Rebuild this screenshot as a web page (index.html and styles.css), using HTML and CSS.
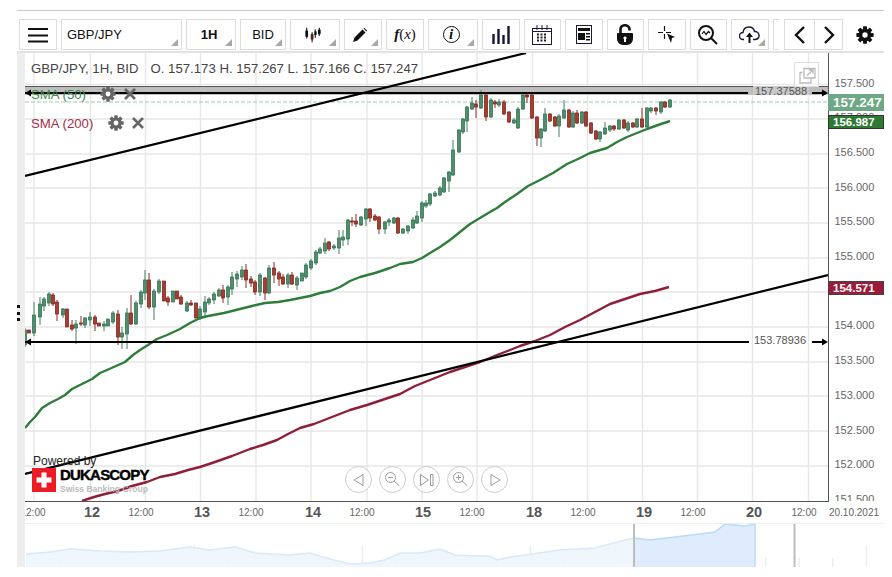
FILE: index.html
```html
<!DOCTYPE html>
<html lang="en">
<head>
<meta charset="utf-8">
<title>GBP/JPY chart</title>
<link rel="stylesheet" href="styles.css">
</head>
<body>
<svg class="defs" width="0" height="0" aria-hidden="true">
  <symbol id="gear" viewBox="-10 -10 20 20">
    <g class="gear-teeth">
      <rect x="-2.2" y="-9.6" width="4.4" height="19.2" rx=".8"/>
      <rect x="-2.2" y="-9.6" width="4.4" height="19.2" rx=".8" transform="rotate(45)"/>
      <rect x="-2.2" y="-9.6" width="4.4" height="19.2" rx=".8" transform="rotate(90)"/>
      <rect x="-2.2" y="-9.6" width="4.4" height="19.2" rx=".8" transform="rotate(135)"/>
      <path fill-rule="evenodd" d="M0-7a7 7 0 1 0 0 14a7 7 0 1 0 0-14zM0-3a3 3 0 1 1 0 6a3 3 0 1 1 0-6z"/>
    </g>
    <circle class="gear-hole" r="3"/>
  </symbol>
  <symbol id="cross" viewBox="0 0 14 14">
    <path class="cross-path" d="M2 2L12 12M12 2L2 12"/>
  </symbol>
</svg>

<div class="top-rule"></div>

<div class="toolbar">
  <div class="btn w38">
    <svg width="22" height="16" viewBox="0 0 22 16"><path class="ico-line" d="M1 2H21M1 8.5H21M1 14.5H21"/></svg>
  </div>
  <div class="btn w121 btn-left corner"><span>GBP/JPY</span></div>
  <div class="btn w50 corner btn-nudge"><b>1H</b></div>
  <div class="btn w46 corner"><span>BID</span></div>
  <div class="btn w50 corner">
    <svg class="shift-c" width="18" height="16" viewBox="0 0 20 16"><path class="ico-thin" d="M3 0V12M9 5V16M12.500 2V11M17 0V9"/><rect x="1.500" y="3" width="3" height="7"/><rect x="7.500" y="7" width="3" height="6" class="ico-red"/><rect x="11.500" y="4" width="2.500" height="4"/><rect x="15.500" y="2" width="3" height="5"/></svg>
  </div>
  <div class="btn w38 corner">
    <svg class="shift" width="14" height="14" viewBox="0 0 14 14"><path d="M0 14L1.500 9.500L9.500 1.500L12.500 4.500L4.500 12.500ZM10.500.5L11.500 0L14 2.500L13.500 3.500Z"/></svg>
  </div>
  <div class="btn w38 fx"><i class="fx-f">f</i><span>(</span><i>x</i><span>)</span></div>
  <div class="btn w50 corner">
    <span class="info"><i>i</i></span>
  </div>
  <div class="btn w37">
    <svg width="18" height="18" viewBox="0 0 18 18"><path class="ico-bar" d="M1.500 8V18M6.500 3V18M11.500 9V18M16.500 0V18"/></svg>
  </div>
  <div class="btn w37">
    <svg width="20" height="20" viewBox="0 0 20 20"><rect class="ico-out" x=".5" y="3.500" width="19" height="16"/><path class="ico-out" d="M.5 6.500H19.500M5 0V5M10 0V5M15 0V5"/><path class="ico-dots" d="M5 9.500H15M5 12.500H15M5 15.500H15"/></svg>
  </div>
  <div class="btn w37">
    <svg width="16" height="19" viewBox="0 0 16 19"><rect class="ico-out" x=".5" y=".5" width="15" height="18"/><path d="M2 3H14V6H2ZM2 8H9V15H2ZM10 8H14V9.500H10ZM10 11H14V12.500H10ZM10 14H14V15.500H10Z"/></svg>
  </div>
  <div class="btn w37">
    <svg width="16" height="21" viewBox="0 0 16 21"><path class="ico-lock" d="M3.500 9V5.500C3.500 0 12 0 12.500 5V6.500"/><path fill-rule="evenodd" d="M1 9H15Q16 9 16 10V15A6 6 0 0 1 10 21H6A6 6 0 0 1 0 15V10Q0 9 1 9ZM8 12.500A1.500 1.500 0 0 0 7 15.200V18H9V15.200A1.500 1.500 0 0 0 8 12.500Z"/></svg>
  </div>
  <div class="btn w37">
    <svg width="18" height="17" viewBox="0 0 18 17"><path class="ico-thin" d="M6.500 0V5M6.500 8V13M0 6.500H5M8 6.500H13"/><path d="M9 7.500L17 11L14 12L13 17Z"/></svg>
  </div>
  <div class="btn w37">
    <svg width="20" height="20" viewBox="0 0 20 20"><circle class="ico-out2" cx="8" cy="8" r="7"/><path class="ico-out2" d="M13 13L19 19"/><path class="ico-thin" d="M4 9L6 6.500L8 9.500L10.500 6.500L12 8"/></svg>
  </div>
  <div class="btn w37 corner">
    <svg width="21" height="17" viewBox="0 0 21 17"><path class="ico-out ico-cloud" d="M5 13.500H4A3.500 3.500 0 0 1 4 6.500C4.500 2 8 1 10 1C13 1 15 3 15.500 5.500C18.500 5 20.500 8 20 10.500C19.500 12.500 18 13.500 16 13.500H14"/><path d="M9.500 17V11H7L10.500 6.500L14 11H11.500V17Z"/></svg>
  </div>
  <div class="btn-stub"></div>
  <div class="pager">
    <div class="pager-cell"><svg width="11" height="18" viewBox="0 0 11 18"><path class="ico-chev" d="M10 1L2 9L10 17"/></svg></div>
    <div class="pager-cell"><svg width="11" height="18" viewBox="0 0 11 18"><path class="ico-chev" d="M1 1L9 9L1 17"/></svg></div>
  </div>
  <svg class="gear-main"><use href="#gear"/></svg>
</div>

<div class="frame">
  <div class="strip">
    <div class="grip"><span></span><span></span><span></span></div>
  </div>
  <div class="main">
    <div class="chart-row">
      <div class="plot">
        <svg class="plot-svg" width="803" height="448" viewBox="25 53 803 448">
          <path class="grid" d="M34 53V501M90.500 53V501M145.500 53V501M200.500 53V501M256 53V501M311 53V501M367 53V501M422 53V501M477 53V501M532.500 53V501M587.500 53V501M642.500 53V501M697.500 53V501M752.500 53V501M808.500 53V501M25 84.500H828M25 119H828M25 154H828M25 188H828M25 223H828M25 258H828M25 292H828M25 327H828M25 362H828M25 396H828M25 431H828M25 466H828"/>
          <rect class="band" x="25" y="87" width="803" height="8"/>
          <path class="band-top" d="M25 86.500H828"/>
          <path class="price-line" d="M25 102H828"/>
          <g id="candles"></g>
          <polyline class="sma50" points="25,428 30,422 35,417 42,408 50,403 58,399 65,395 72,389 80,385 92,379 100,373 107,370 116,366 125,362 133,355 140,350 148,345 157,339 167,335 180,329 190,323 200,318 208,316 224,313 240,309 252,306 265,303 278,302 290,300 300,298 310,296 320,293 330,291 340,287 350,281 360,277 375,273 390,268 400,264 413,262 422,258 430,253 440,247 450,240 460,232 470,224 480,218 490,212 497,208 505,202 517,194 528,186 540,180 553,173 567,164 578,159 590,153 607,148 617,142 627,137 637,133 647,129 658,125 670,121"/>
          <polyline class="sma200" points="82,501 94,497 105,494 118,491 132,486 147,482 160,477 175,474 188,470 200,467 215,462 232,456 250,449 263,445 277,440 288,434 300,428 314,424 332,417 350,410 367,405 382,400 400,394 415,386 430,380 450,372 465,367 480,362 497,355 510,350 520,346 535,341 550,335 565,327 580,320 595,312 610,304 625,299 640,294 655,291 669,287"/>
          <path class="trend" d="M25 176L526 53M25 474L828 275"/>
          <path class="trend" d="M25 93H748M29 93H25M25 342H749M812 93H824M812 342H824"/>
          <path class="arrow" d="M828 93L822 89.500V96.500ZM828 342L822 338.500V345.500ZM25 93L31 89.500V96.500ZM25 342L31 338.500V345.500Z"/>
          <rect class="tag-bg" x="753" y="86" width="56" height="9"/>
          <text class="line-label" x="755" y="95">157.37588</text>
          <text class="line-label" x="754" y="344">153.78936</text>
          <g class="expand">
            <rect class="expand-box" x="794.500" y="62.500" width="24" height="24"/>
            <path class="expand-line" d="M802.500 72.500H800V83H811V78M804 68.500H815V78H804ZM807 75.500L813 70M809 70H813V74"/>
          </g>
        </svg>

        <div class="legend">
          <div class="legend-head"><span>GBP/JPY, 1H, BID</span><span>O. 157.173 H. 157.267 L. 157.166 C. 157.247</span></div>
          <div class="ind ind-green"><span class="ind-name">SMA (50)</span><svg class="ind-gear"><use href="#gear"/></svg><svg class="ind-x"><use href="#cross"/></svg></div>
          <div class="ind ind-red"><span class="ind-name">SMA (200)</span><svg class="ind-gear"><use href="#gear"/></svg><svg class="ind-x"><use href="#cross"/></svg></div>
        </div>

        <div class="logo">
          <div class="logo-pow">Powered by</div>
          <div class="logo-row">
            <svg width="24" height="24" viewBox="0 0 24 24"><rect class="logo-red" width="24" height="24"/><path class="logo-white" d="M9.500 4.500H14.500V9.500H19.500V14.500H14.500V19.500H9.500V14.500H4.500V9.500H9.500Z"/></svg>
            <div class="logo-text"><div class="logo-name">DUKASCOPY</div><div class="logo-sub">Swiss Banking Group</div></div>
          </div>
        </div>

        <div class="controls">
          <div class="ctl"><svg width="14" height="14" viewBox="0 0 14 14"><path class="ctl-line" d="M11 1.500V12.500L2 7Z"/></svg></div>
          <div class="ctl"><svg width="17" height="17" viewBox="0 0 17 17"><circle class="ctl-line" cx="6.500" cy="6.500" r="5"/><path class="ctl-line" d="M4 6.500H9M10 10L15.500 15"/></svg></div>
          <div class="ctl"><svg width="16" height="14" viewBox="0 0 16 14"><path class="ctl-line" d="M1.500 1.500V12.500L9.500 7ZM11.500 1.500H14V12.500H11.500Z"/></svg></div>
          <div class="ctl"><svg width="17" height="17" viewBox="0 0 17 17"><circle class="ctl-line" cx="6.500" cy="6.500" r="5"/><path class="ctl-line" d="M4 6.500H9M6.500 4V9M10 10L15.500 15"/></svg></div>
          <div class="ctl"><svg width="14" height="14" viewBox="0 0 14 14"><path class="ctl-line" d="M3 1.500V12.500L12 7Z"/></svg></div>
        </div>
      </div>

      <div class="price-axis">
        <div class="price-list">
          <div>157.500</div><div>157.000</div><div>156.500</div><div>156.000</div><div>155.500</div><div>155.000</div><div>154.500</div><div>154.000</div><div>153.500</div><div>153.000</div><div>152.500</div><div>152.000</div><div>151.500</div>
        </div>
        <div class="tag tag-price">157.247</div>
        <div class="tag tag-sma50">156.987</div>
        <div class="tag tag-sma200">154.571</div>
      </div>
    </div>

    <svg class="time-axis" width="859" height="22" viewBox="25 502 859 22">
      <path class="t-rule" d="M25 523.500H884"/>
      <text class="t-hour" x="33" y="516">12:00</text>
      <text class="t-day" x="92" y="517">12</text>
      <text class="t-hour" x="141" y="516">12:00</text>
      <text class="t-day" x="202" y="517">13</text>
      <text class="t-hour" x="251" y="516">12:00</text>
      <text class="t-day" x="313" y="517">14</text>
      <text class="t-hour" x="362" y="516">12:00</text>
      <text class="t-day" x="423" y="517">15</text>
      <text class="t-hour" x="472" y="516">12:00</text>
      <text class="t-day" x="534" y="517">18</text>
      <text class="t-hour" x="583" y="516">12:00</text>
      <text class="t-day" x="644" y="517">19</text>
      <text class="t-hour" x="693" y="516">12:00</text>
      <text class="t-day" x="754" y="517">20</text>
      <text class="t-hour" x="804" y="516">12:00</text>
      <text class="t-date" x="854" y="516">20.10.2021</text>
    </svg>

    <svg class="navigator" width="859" height="43" viewBox="25 524 859 43">
      <path id="nav-ticks" class="nav-tick" d=""/>
      <polygon class="nav-fill" points="26,567 26,554 50,552 70,549 100,551 130,552 160,551 190,547 210,550 235,547 255,553 290,555 310,553 330,559 350,564 370,563 385,560 400,553 420,553 440,549 455,555 480,556 490,556 497,560 510,557 525,555 560,550 595,548 625,540 634,538 634,567"/>
      <polyline class="nav-line" points="26,554 50,552 70,549 100,551 130,552 160,551 190,547 210,550 235,547 255,553 290,555 310,553 330,559 350,564 370,563 385,560 400,553 420,553 440,549 455,555 480,556 490,556 497,560 510,557 525,555 560,550 595,548 625,540 634,538"/>
      <polygon class="nav-sel" points="634,567 634,538 650,540 675,537 700,534 715,532 725,524 745,526 755,524 755,567"/>
      <polyline class="nav-sel-line" points="634,538 650,540 675,537 700,534 715,532 725,524 745,526 755,524 755,567"/>
      <path class="nav-handle" d="M634 524V567M794.500 524V567"/>
    </svg>
  </div>
</div>
<script src="script.js"></script>
</body>
</html>
```

FILE: styles.css
```css
* { box-sizing: border-box; }
html, body { margin: 0; padding: 0; background: #fff; overflow: hidden; }
body { width: 892px; height: 577px; font-family: "Liberation Sans", Arial, sans-serif; color: #222; }
.defs { position: absolute; }

.gear-teeth { fill: currentColor; }
.gear-hole { fill: #fff; }
.cross-path { fill: none; stroke: currentColor; stroke-width: 2.6; }

.top-rule { height: 1px; width: 867px; margin: 10px 0 0 17px; background: #c8c8c8; }

.toolbar { display: flex; gap: 4px; align-items: center; height: 31px; margin: 8px 0 0 19px; }
.btn { position: relative; height: 31px; border: 1px solid #ddd; display: flex; align-items: center; justify-content: center; font-size: 13px; color: #111; background: #fff; flex: none; }
.btn svg { display: block; fill: #111; }
.btn .shift { margin-right: 6px; }
.btn .shift-c { margin-left: 1px; margin-right: 5px; }
.btn-nudge { padding-right: 4px; }
.btn-left { justify-content: flex-start; padding-left: 5px; }
.w37 { width: 37.5px; }
.w38 { width: 38px; }
.w46 { width: 46px; }
.w50 { width: 50px; }
.w121 { width: 121px; }
.corner::after { content: ""; position: absolute; right: 3px; bottom: 3px; width: 0; height: 0; border-style: solid; border-width: 0 0 7px 7px; border-color: transparent transparent #a8a8a8 transparent; }
.btn-stub { width: 6px; height: 31px; flex: none; border: 1px solid #ddd; border-right: 0; }
.ico-line { fill: none; stroke: #111; stroke-width: 2; }
.ico-thin { fill: none; stroke: #111; stroke-width: 1.200; }
.ico-red { fill: #5a1a10; }
.ico-bar { fill: none; stroke: #16163a; stroke-width: 2.400; }
.ico-out { fill: none; stroke: #1a1a3a; stroke-width: 1; }
.ico-cloud { stroke-width: 1.400; }
.ico-out2 { fill: none; stroke: #111; stroke-width: 2; }
.ico-chev { fill: none; stroke: #111; stroke-width: 2.400; }
.ico-dots { fill: none; stroke: #222; stroke-width: 2; stroke-dasharray: 2 1.500; }
.ico-lock { fill: none; stroke: #111; stroke-width: 2.600; }
.fx { font-family: "Liberation Serif", serif; font-size: 15px; }
.fx-f { font-weight: bold; }
.info { display: flex; width: 17px; height: 17px; border: 1.500px solid #111; border-radius: 50%; align-items: center; justify-content: center; font-family: "Liberation Serif", serif; font-size: 15px; font-weight: bold; margin-right: 4px; }
.pager { display: flex; width: 59px; height: 31px; border: 1px solid #ddd; margin-left: 1.500px; flex: none; }
.pager-cell { width: 29px; flex: none; display: flex; align-items: center; justify-content: center; }
.pager-cell + .pager-cell { border-left: 1px solid #ddd; }
.gear-main { width: 18px; height: 18px; margin-left: 9px; color: #111; flex: none; }

.frame { display: flex; width: 867px; height: 516px; margin: 1px 0 0 17px; border-top: 2px solid #e2e2e2; }
.strip { width: 8px; flex: none; height: 514px; background: #eee; display: flex; align-items: flex-start; justify-content: center; padding-top: 252px; }
.grip { display: flex; flex-direction: column; gap: 3.500px; width: 4px; margin-left: -4px; }
.grip span { display: block; width: 3px; height: 3px; background: #111; }
.main { width: 859px; flex: none; }
.chart-row { display: flex; height: 449px; }

.plot { position: relative; width: 803px; height: 449px; border-bottom: 1px solid #555; flex: none; overflow: hidden; }
.plot-svg { display: block; }
.grid { fill: none; stroke: #e7e7e7; stroke-width: 1.400; }
.band { fill: #bdbdbd; }
.band-top { fill: none; stroke: #555; stroke-width: 1; }
.price-line { fill: none; stroke: #a0cbb0; stroke-width: 1.200; stroke-dasharray: 4 2; }
.sma50 { fill: none; stroke: #2f7d3a; stroke-width: 2.400; stroke-linejoin: round; }
.sma200 { fill: none; stroke: #8e1f38; stroke-width: 2.400; stroke-linejoin: round; }
.trend { fill: none; stroke: #000; stroke-width: 2.200; }
.arrow { fill: #000; }
.tag-bg { fill: #c9c9c9; }
.line-label { font-size: 11px; fill: #555; }
.expand-box { fill: #fff; fill-opacity: .6; stroke: #ddd; }
.expand-line { fill: none; stroke: #bcbcbc; stroke-width: 1.300; }

.c-g { fill: #4f8d6c; stroke: #2f6f4f; stroke-width: .7; }
.c-r { fill: #a83c2e; stroke: #7d1f1a; stroke-width: .7; }
.w-g { stroke: #3f7f5f; stroke-width: 1; }
.w-r { stroke: #8a2a22; stroke-width: 1; }

.legend { position: absolute; left: 6px; top: 8px; font-size: 13.200px; color: #444; }
.legend-head { display: flex; gap: 12px; white-space: nowrap; height: 18px; }
.ind { display: flex; align-items: center; height: 16px; }
.ind-green { color: #3f8a50; margin-top: 7px; }
.ind-red { color: #a0304a; margin-top: 13px; }
.ind-name { width: 68px; flex: none; }
.ind-gear { width: 16px; height: 16px; color: #666; flex: none; margin-left: 1px; }
.ind-x { width: 14px; height: 14px; color: #666; flex: none; margin-left: 7px; }
.ind-red .ind-name { width: 76px; }

.logo { position: absolute; left: 8px; top: 401px; }
.logo-pow { font-size: 12px; color: #222; height: 14px; line-height: 14px; }
.logo-row { display: flex; gap: 4px; margin-left: -1px; }
.logo-red { fill: #ed1c24; }
.logo-white { fill: #fff; }
.logo-text { margin-top: -1px; }
.logo-name { font-size: 15px; font-weight: bold; color: #000; line-height: 16px; letter-spacing: -.8px; -webkit-text-stroke: .4px #000; }
.logo-sub { font-size: 8.500px; font-weight: bold; color: #bbb; line-height: 11px; margin-top: 1px; white-space: nowrap; }

.controls { position: absolute; left: 320px; top: 413px; display: flex; gap: 7px; }
.ctl { width: 27px; height: 27px; border: 1px solid #ccc; border-radius: 50%; display: flex; align-items: center; justify-content: center; background: rgba(255,255,255,.5); }
.ctl-line { fill: none; stroke: #9c9c9c; stroke-width: 1; }

.price-axis { position: relative; width: 56px; height: 449px; border-left: 1px solid #555; overflow: visible; flex: none; }
.price-list { height: 448px; overflow: hidden; padding-top: 12.650px; font-size: 11px; color: #666; }
.price-list div { height: 34.700px; line-height: 34.700px; padding-left: 5.500px; }
.tag { position: absolute; left: -1px; width: 56px; color: #fff; text-align: center; }
.tag-price { top: 41px; height: 17px; line-height: 17px; background: #6ea884; font-size: 13.500px; font-weight: bold; text-align: left; padding-left: 5px; }
.tag-sma50 { top: 62px; height: 14px; line-height: 13px; background: #2e7a34; border: 1px solid #333; font-size: 11.500px; font-weight: bold; text-align: left; padding-left: 4px; }
.tag-sma200 { top: 228px; height: 14px; line-height: 13px; background: #9b1c3a; border: 1px solid #444; font-size: 11.500px; font-weight: bold; text-align: left; padding-left: 4px; }

.time-axis { display: block; }
.t-rule { fill: none; stroke: #eee; stroke-width: 1; }
.t-hour { font-size: 10px; fill: #666; text-anchor: middle; }
.t-day { font-size: 14.500px; font-weight: bold; fill: #555; text-anchor: middle; }
.t-date { font-size: 10px; fill: #666; text-anchor: middle; }

.navigator { display: block; }
.nav-tick { fill: none; stroke: #eee; stroke-width: 1.500; }
.nav-fill { fill: #eef6fd; fill-opacity: .92; }
.nav-line { fill: none; stroke: #d8e9fa; stroke-width: 1.500; }
.nav-sel { fill: #dcebfd; fill-opacity: .95; }
.nav-sel-line { fill: none; stroke: #bcd9fb; stroke-width: 1.500; }
.nav-handle { fill: none; stroke: #bdbdbd; stroke-width: 2; }
```

FILE: script.js
```js
// x, top, bottom, colour, optional wick top, optional wick bottom
var CANDLES = [
  [25,330,345,"g",328,347],[29,330,333,"r"],[34,315,333,"g",302,336],[40,304,317,"g",297,325],[44,299,306,"g",297,311],[49,294,303,"g",292,306],[53,295,304,"r",293,306],[57,302,314,"r",300,321],[63,309,315,"g",308,318],[67,309,327,"r"],[72,325,329,"r",320,331],[76,324,328,"g",320,344],[81,323,324,"r",316,326],[85,318,325,"g",317,328],[90,317,320,"g",312,326],[95,317,324,"r",315,331],[99,323,326,"r"],[104,324,326,"g",321,331],[108,319,326,"g"],[113,313,322,"g",311,324],[118,314,337,"r",310,345],[122,333,337,"g",327,349],[127,313,334,"g",308,349],[131,313,324,"r",295,325],[136,303,324,"g",301,325],[141,292,304,"g",290,308],[145,280,293,"g",270,300],[149,280,307,"r",273,309],[154,291,307,"g",289,320],[159,281,292,"g",279,294],[164,281,301,"r"],[168,298,302,"r",296,306],[173,291,302,"g"],[177,291,299,"r"],[181,297,304,"r",295,305],[187,303,311,"g",301,312],[191,303,305,"r",300,306],[196,303,318,"r"],[200,309,318,"g",306,320],[205,302,312,"g",296,318],[209,299,303,"g",297,305],[214,294,300,"g",292,304],[219,290,296,"g",288,297],[223,290,298,"r",285,303],[228,287,297,"g",285,305],[232,277,289,"g",272,295],[237,274,279,"g",271,287],[242,270,277,"g",266,280],[246,270,280,"r",264,288],[251,279,283,"r",276,287],[255,282,292,"r",280,295],[260,275,292,"g",273,296],[265,278,293,"r",277,300],[269,268,293,"g",265,294],[274,268,275,"r",262,283],[279,273,279,"r",271,286],[283,277,284,"r",274,285],[288,275,284,"g",273,288],[292,275,284,"r",272,285],[297,278,285,"g",276,290],
  [302,273,281,"g"],[306,265,277,"g",263,279],[311,261,268,"g",259,270],[316,252,263,"g",250,265],[320,249,253,"g",247,254],[325,243,251,"g",238,254],[329,242,249,"r",241,251],[334,246,248,"g",244,250],[339,238,248,"g",230,254],[343,237,240,"g",230,246],[348,220,239,"g",219,245],[352,221,222,"r",217,226],[356,221,224,"r",214,227],[361,217,225,"g",216,226],[366,209,219,"g",208,226],[370,209,218,"r",208,222],[375,216,220,"r",214,221],[379,217,229,"r",216,234],[385,222,229,"g",221,234],[389,220,222,"g",218,226],[394,218,223,"g",217,224],[398,218,233,"r",217,234],[403,229,233,"g",228,234],[408,226,231,"g",225,234],[413,220,228,"g",217,229],[417,216,223,"g",211,224],[422,203,218,"g",201,222],[426,203,206,"g",200,208],
  [430,194,204,"g",193,206],[435,193,196,"g",191,197],[440,188,195,"g",186,196],[444,178,192,"g",177,193],[449,172,181,"g",171,192],[453,150,175,"g",140,176],[459,130,152,"g",129,153],[463,119,132,"g",118,134],[467,107,121,"g",106,132],[472,103,109,"g",97,110],[476,104,107,"r",100,118],[481,95,108,"g",90,109],[486,95,117,"r",94,121],[491,100,117,"g",98,118],[495,102,104,"r",100,108],[499,102,105,"g",99,107],[504,102,114,"r",100,115],[509,112,122,"r",111,123],[514,120,123,"g",118,124],[518,109,128,"g",107,129],[523,95,109,"g",93,110],[527,95,97,"r",93,103],[532,95,118,"r",94,119],[537,117,138,"r",116,146],[541,129,138,"g",128,147],[545,114,131,"g",108,132],[550,114,121,"r",113,122],[555,117,126,"r",116,127],[559,116,126,"g",114,137],[564,110,118,"g",100,119],[569,110,127,"r",109,128],[573,113,127,"g",111,128],[577,113,123,"r",110,124],[582,112,123,"g",111,124],[586,112,126,"r",111,127],[591,123,133,"r",122,134],[596,131,139,"r",130,140],[600,132,139,"g",131,142],[605,128,134,"g",122,135],[610,126,130,"g",125,132],[614,126,129,"r",125,131],[619,120,129,"g",119,130],[624,120,128,"r",119,129],[628,123,130,"g",121,132],[633,123,127,"r",122,128],[637,119,127,"g",118,128],[642,119,127,"r",108,128],[647,108,127,"g",107,128],[651,108,111,"g",107,113],[656,108,111,"r",107,115],[661,102,112,"g",101,114],[665,102,107,"r",101,108],[670,100,107,"g",99,108]
];

var SVG_NS = "http://www.w3.org/2000/svg";
var group = document.getElementById("candles");

function el(name, attrs) {
  var node = document.createElementNS(SVG_NS, name);
  Object.keys(attrs).forEach(function (key) { node.setAttribute(key, attrs[key]); });
  return node;
}

CANDLES.forEach(function (c) {
  var top = c[4] === undefined ? c[1] : c[4];
  var bottom = c[5] === undefined ? c[2] : c[5];
  group.appendChild(el("line", { "class": "w-" + c[3], x1: c[0], x2: c[0], y1: top, y2: bottom }));
  group.appendChild(el("rect", { "class": "c-" + c[3], x: c[0] - 1.6, y: c[1], width: 3.2, height: Math.max(c[2] - c[1], 1) }));
});

var ticks = "";
for (var k = 0; k < 25; k++) {
  var x = 60 + 33.6 * k;
  ticks += "M" + x.toFixed(1) + " " + (k % 5 === 4 ? 545 : 558) + "V567";
}
document.getElementById("nav-ticks").setAttribute("d", ticks);
```
